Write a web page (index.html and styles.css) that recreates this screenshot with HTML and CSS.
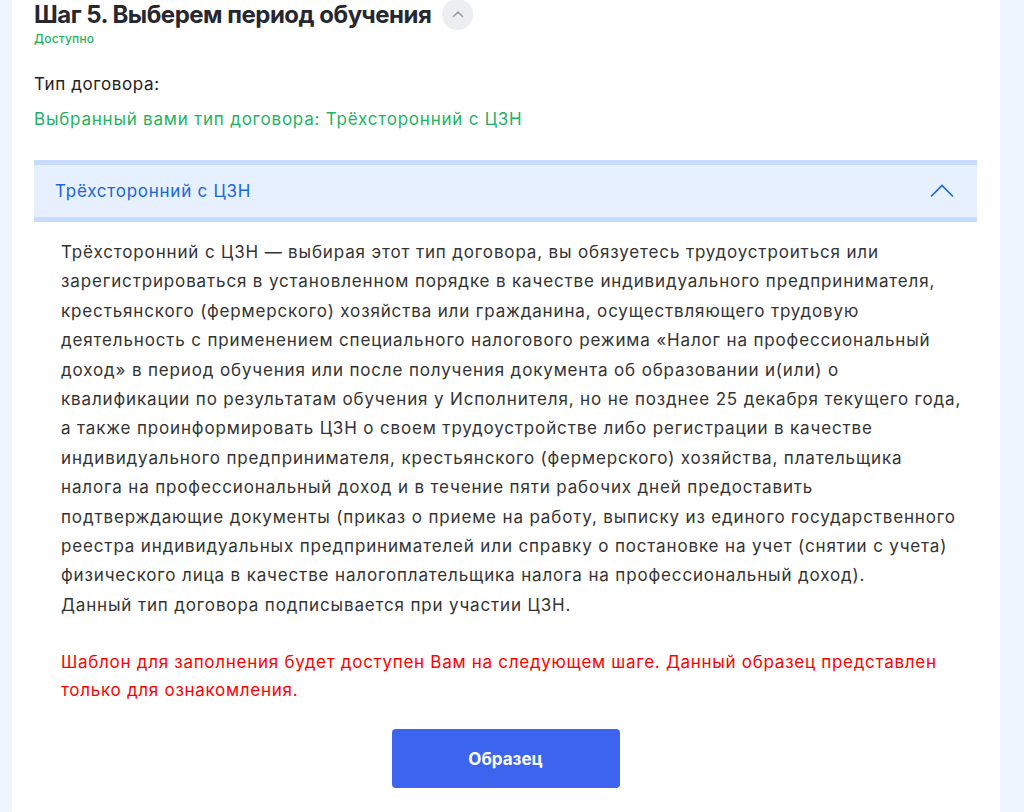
FILE: index.html
```html
<!DOCTYPE html>
<html lang="ru">
<head>
<meta charset="utf-8">
<link rel="stylesheet" href="styles.css">
</head>
<body>
<div class="page">
  <section class="card">
    <div class="step-head">
      <h2 class="step-title">Шаг 5. Выберем период обучения</h2>
      <button class="toggle" aria-label="Свернуть">
        <svg width="12" height="8" viewBox="0 0 12 8"><path d="M1.5 6.5 L6 2 L10.5 6.5" fill="none" stroke="#9aa0ad" stroke-width="1.6" stroke-linecap="round" stroke-linejoin="round"/></svg>
      </button>
    </div>
    <div class="status">Доступно</div>

    <div class="label">Тип договора:</div>
    <div class="selected">Выбранный вами тип договора: Трёхсторонний с ЦЗН</div>

    <div class="accordion">
      <div class="acc-head">
        <span class="acc-title">Трёхсторонний с ЦЗН</span>
        <svg class="acc-icon" width="24" height="14" viewBox="0 0 24 14"><path d="M1 12.5 L12 1.5 L23 12.5" fill="none" stroke="#1a66d9" stroke-width="1.6"/></svg>
      </div>
      <div class="acc-body">
        <p class="desc">Трёхсторонний с ЦЗН — выбирая этот тип договора, вы обязуетесь трудоустроиться или<br>
зарегистрироваться в установленном порядке в качестве индивидуального предпринимателя,<br>
крестьянского (фермерского) хозяйства или гражданина, осуществляющего трудовую<br>
деятельность с применением специального налогового режима «Налог на профессиональный<br>
доход» в период обучения или после получения документа об образовании и(или) о<br>
квалификации по результатам обучения у Исполнителя, но не позднее 25 декабря текущего года,<br>
а также проинформировать ЦЗН о своем трудоустройстве либо регистрации в качестве<br>
индивидуального предпринимателя, крестьянского (фермерского) хозяйства, плательщика<br>
налога на профессиональный доход и в течение пяти рабочих дней предоставить<br>
подтверждающие документы (приказ о приеме на работу, выписку из единого государственного<br>
реестра индивидуальных предпринимателей или справку о постановке на учет (снятии с учета)<br>
физического лица в качестве налогоплательщика налога на профессиональный доход).<br>
Данный тип договора подписывается при участии ЦЗН.</p>
        <p class="warning">Шаблон для заполнения будет доступен Вам на следующем шаге. Данный образец представлен<br>только для ознакомления.</p>
        <div class="actions">
          <button class="btn-primary">Образец</button>
        </div>
      </div>
    </div>
  </section>
</div>
</body>
</html>
```
FILE: styles.css
```css
* { box-sizing: border-box; }
html, body {
  margin: 0;
  padding: 0;
  background: #eef5fe;
  font-family: Inter, "Noto Sans", "Liberation Sans", sans-serif;
  color: #222;
}
.page {
  padding-left: 12px;
  width: 1000px;
  height: 812px;
  overflow: hidden;
}
.card {
  background: #fff;
  height: 812px;
  padding: 0 23px 0 22px;
  box-shadow: 2px 0 4px rgba(60, 90, 140, 0.08);
}
.step-head {
  display: flex;
  align-items: center;
  gap: 11px;
  height: 30px;
}
.step-title {
  margin: 0;
  font-size: 24px;
  font-weight: 700;
  color: #27272f;
  letter-spacing: -0.5px;
  line-height: 30px;
}
.toggle {
  width: 31px;
  height: 31px;
  border-radius: 50%;
  border: none;
  background: #eceef2;
  display: flex;
  align-items: center;
  justify-content: center;
  padding: 0;
  margin-top: -2px;
}
.status {
  font-size: 12px;
  color: #1db363;
  font-weight: 500;
  line-height: 16px;
  margin-top: 1px;
  letter-spacing: 0.2px;
}
.label {
  margin-top: 26px;
  font-size: 17px;
  line-height: 22px;
  color: #222;
  letter-spacing: 0.6px;
}
.selected {
  margin-top: 13px;
  font-size: 17px;
  line-height: 22px;
  color: #1db363;
  letter-spacing: 0.78px;
}
.accordion {
  margin-top: 30px;
}
.acc-head {
  height: 62px;
  background: #e6f0fe;
  border-top: 5px solid #c7dcfa;
  border-bottom: 5px solid #c7dcfa;
  display: flex;
  align-items: center;
  justify-content: space-between;
  padding: 0 23px 0 21px;
}
.acc-title {
  color: #1a66d9;
  font-size: 17px;
  letter-spacing: 0.75px;
}
.acc-body {
  padding: 16px 0 0 27px;
}
.desc {
  margin: 0;
  font-size: 17px;
  line-height: 29.4px;
  color: #333;
  white-space: nowrap;
  letter-spacing: 0.85px;
}
.warning {
  margin: 28px 0 0;
  font-size: 17px;
  line-height: 28px;
  color: #ff0000;
  white-space: nowrap;
  letter-spacing: 0.72px;
}
.actions {
  display: flex;
  justify-content: center;
  margin-top: 25px;
  padding-right: 27px;
}
.btn-primary {
  width: 228px;
  height: 59px;
  border: none;
  border-radius: 4px;
  background: #3d64ef;
  color: #fff;
  font-family: inherit;
  font-size: 17px;
  font-weight: 700;
}
```
